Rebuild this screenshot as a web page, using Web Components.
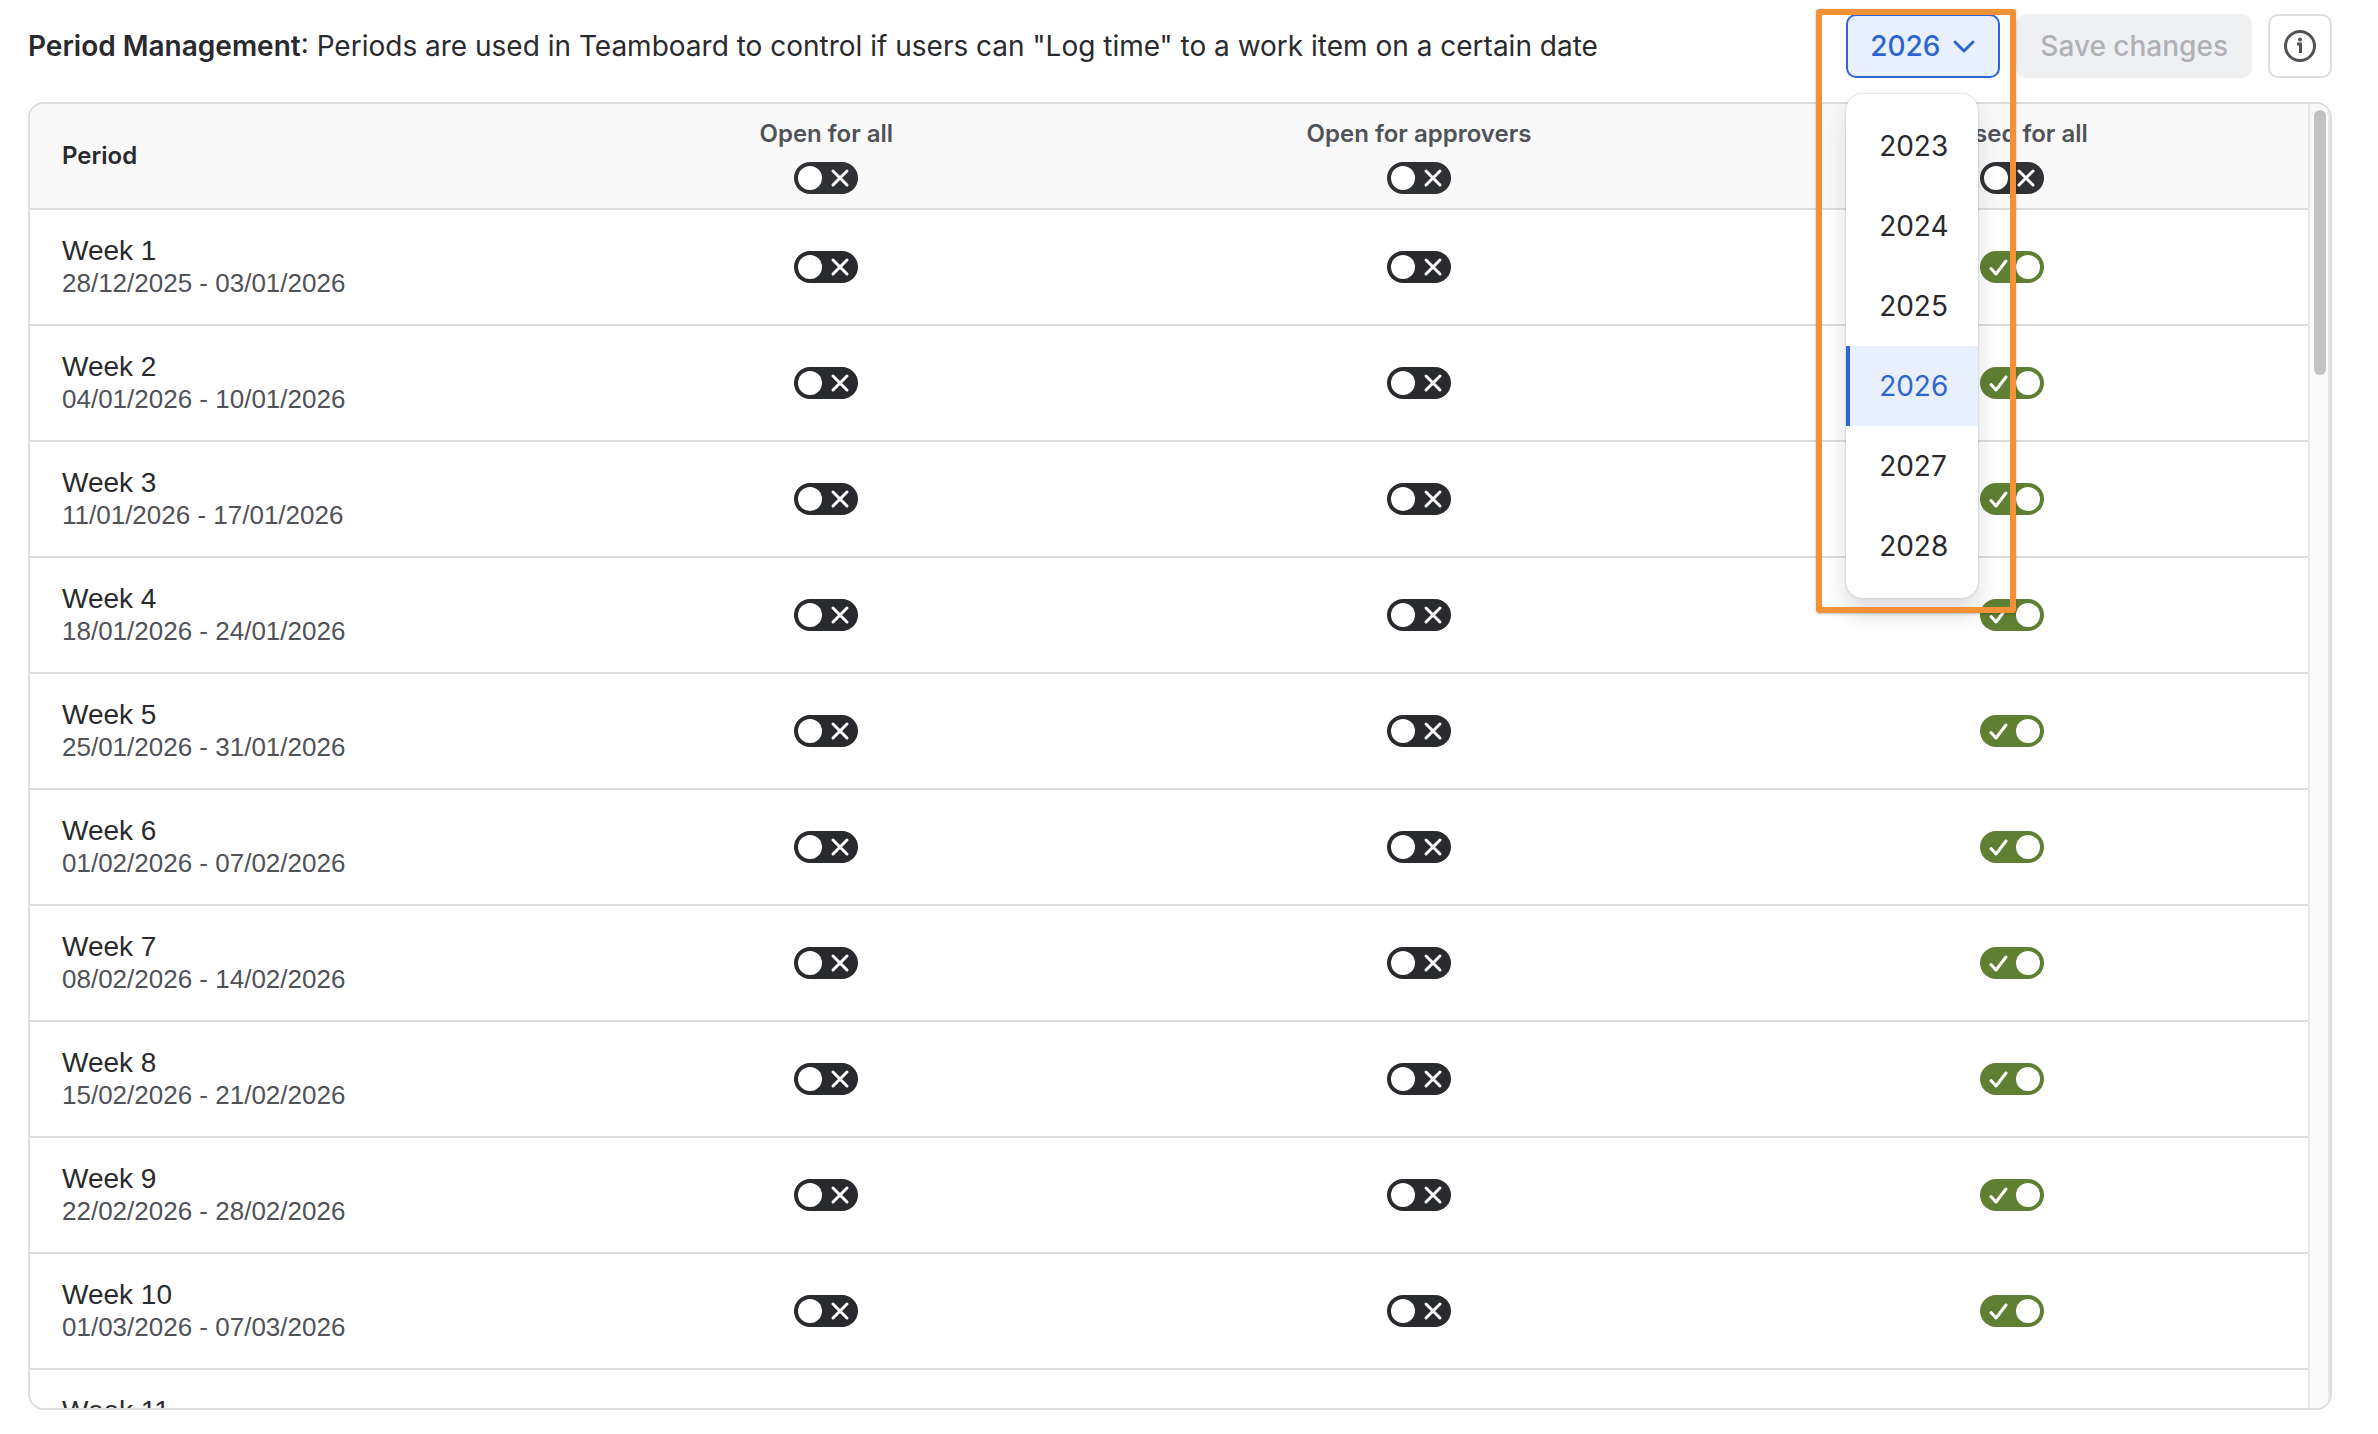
<!DOCTYPE html>
<html lang="en">
<head>
<meta charset="utf-8">
<title>Period Management</title>
<style>
  html, body { height: 100%; }
  body { margin: 0; background: #fff; color: #292a2e; font-family: Inter, "Liberation Sans", sans-serif; font-size: 28px; }
</style>
</head>
<body>
<period-page></period-page>
<script>
class ToggleSwitch extends HTMLElement {
  constructor() {
    super();
    this.attachShadow({ mode: 'open' }).innerHTML = `
      <style>
        :host { display: block; width: 64px; height: 32px; --off: #292a2e; }
        label { display: flex; align-items: center; position: relative; box-sizing: border-box; width: 100%; height: 100%; padding: 0 4px; border-radius: 16px; background: var(--off); cursor: pointer; }
        input { position: absolute; inset: 0; width: 100%; height: 100%; margin: 0; opacity: 0; cursor: pointer; }
        .knob { width: 24px; height: 24px; border-radius: 12px; background: #fff; }
        svg { width: 32px; height: 32px; fill: none; stroke: #fff; stroke-width: 3; stroke-linecap: round; stroke-linejoin: round; }
        .check { display: none; }
        label:has(:checked) { background: #5f8032; }
        :checked ~ .check { display: block; }
        :checked ~ .cross { display: none; }
      </style>
      <label>
        <input type="checkbox" role="switch">
        <svg class="check" viewBox="0 0 32 32"><path d="M7 17.5l5 5.500L22 10"/></svg>
        <span class="knob"></span>
        <svg class="cross" viewBox="0 0 32 32"><path d="M11 9l14 14M25 9L11 23"/></svg>
      </label>`;
  }
  connectedCallback() {
    const input = this.shadowRoot.querySelector('input');
    input.checked = this.hasAttribute('checked');
    input.setAttribute('aria-label', this.getAttribute('label') || '');
  }
}
customElements.define('toggle-switch', ToggleSwitch);

class YearPicker extends HTMLElement {
  constructor() {
    super();
    const years = [2023, 2024, 2025, 2026, 2027, 2028];
    this.attachShadow({ mode: 'open' }).innerHTML = `
      <style>
        :host { display: block; position: relative; z-index: 2; }
        button { font: inherit; cursor: pointer; }
        .trigger { display: flex; align-items: center; gap: 12px; box-sizing: border-box; height: 64px; padding: 0 22px; border: 2px solid #2f65d3; border-radius: 10px; background: #e9f0fd; color: #2f65d3; font-weight: 500; }
        .trigger svg { width: 24px; height: 24px; fill: none; stroke: currentColor; stroke-width: 3; stroke-linecap: round; stroke-linejoin: round; }
        .menu { position: absolute; top: 80px; left: 0; display: flex; flex-direction: column; width: 132px; padding: 12px 0; border-radius: 16px; background: #fff; box-shadow: 0 16px 24px rgba(30,31,33,.15), 0 0 2px rgba(30,31,33,.31); }
        .menu button { box-sizing: border-box; height: 80px; padding: 0 0 0 29px; border: 0; border-left: 4px solid transparent; background: none; color: #292a2e; text-align: left; }
        .menu button[aria-checked=true] { border-left-color: #2f65d3; background: #e9f0fd; color: #2f65d3; }
        .mark { position: absolute; top: -5px; left: -30px; box-sizing: border-box; width: 200px; height: 604px; border: 6px solid #f29136; border-radius: 3px; box-shadow: 0 1px 3px rgba(0,0,0,.25); pointer-events: none; }
      </style>
      <button class="trigger" aria-haspopup="menu" aria-expanded="true">2026
        <svg viewBox="0 0 24 24"><path d="M3 8l9 9 9-9"/></svg>
      </button>
      <div class="menu" role="menu">
        ${years.map(y => `<button role="menuitemradio" aria-checked="${y === 2026}">${y}</button>`).join('')}
      </div>
      <div class="mark"></div>`;
  }
}
customElements.define('year-picker', YearPicker);

class PageToolbar extends HTMLElement {
  constructor() {
    super();
    this.attachShadow({ mode: 'open' }).innerHTML = `
      <style>
        :host { display: flex; align-items: center; gap: 16px; }
        p { flex: 1; margin: 0; line-height: 32px; }
        b { font-weight: 600; }
        button { font: inherit; box-sizing: border-box; height: 64px; border-radius: 10px; }
        .save { border: 0; padding: 0 24px; background: #eff0f2; color: #afb1b6; font-weight: 500; }
        .info { display: flex; align-items: center; justify-content: center; width: 64px; padding: 0; border: 2px solid #dddddf; background: #fff; color: #505258; }
        svg { width: 32px; height: 32px; fill: none; stroke: currentColor; stroke-width: 3; }
      </style>
      <p><b><slot name="title"></slot></b>: <slot></slot></p>
      <year-picker></year-picker>
      <button class="save" disabled>Save changes</button>
      <button class="info" aria-label="Information">
        <svg viewBox="0 0 32 32"><circle cx="16" cy="16" r="14.500"/><path d="M13 14h3.500v9"/><circle cx="16" cy="9.500" r="2" fill="currentColor" stroke="none"/></svg>
      </button>`;
  }
}
customElements.define('page-toolbar', PageToolbar);

class PeriodTable extends HTMLElement {
  constructor() {
    super();
    const day = 86400000;
    const fmt = t => new Date(t).toISOString().slice(0, 10).split('-').reverse().join('/');
    const start = Date.UTC(2025, 11, 28);
    const rows = Array.from({ length: 11 }, (_, i) => {
      const from = start + i * 7 * day, name = `Week ${i + 1}`;
      return `<tr><td><div class="name">${name}</div><div class="dates">${fmt(from)} - ${fmt(from + 6 * day)}</div></td>
        <td><toggle-switch label="${name} open for all"></toggle-switch></td>
        <td><toggle-switch label="${name} open for approvers"></toggle-switch></td>
        <td><toggle-switch checked label="${name} closed for all"></toggle-switch></td></tr>`;
    }).join('');
    this.attachShadow({ mode: 'open' }).innerHTML = `
      <style>
        :host { display: flex; min-height: 0; overflow: hidden; border: 2px solid #dddddd; border-radius: 16px; }
        .view { flex: 1; overflow: hidden; }
        table { width: 100%; table-layout: fixed; border-collapse: separate; border-spacing: 0; }
        th, td { box-sizing: border-box; padding: 0 32px; border-bottom: 2px solid #dddddd; text-align: left; vertical-align: middle; }
        th { height: 106px; background: #f9f9f9; font-size: 24px; line-height: 32px; font-weight: 600; }
        th:first-child { width: 500px; }
        td { height: 116px; font-family: "Liberation Sans", sans-serif; }
        th:not(:first-child) { padding: 0; color: #505258; text-align: center; }
        th toggle-switch { margin-top: 12px; --off: #303135; }
        toggle-switch { margin: 0 auto; }
        .name { font-size: 28px; line-height: 32px; }
        .dates { font-size: 26px; line-height: 32px; color: #505258; }
        .track { box-sizing: border-box; width: 22px; padding: 6px 4px; border: solid #e8e8e8; border-width: 0 2px; background: #fafafa; }
        .thumb { width: 12px; height: 265px; border-radius: 6px; background: #c1c1c1; }
      </style>
      <div class="view"><table>
        <thead><tr><th scope="col">Period</th>
          <th scope="col">Open for all<toggle-switch label="Open for all"></toggle-switch></th>
          <th scope="col">Open for approvers<toggle-switch label="Open for approvers"></toggle-switch></th>
          <th scope="col">Closed for all<toggle-switch label="Closed for all"></toggle-switch></th></tr></thead>
        <tbody>${rows}</tbody>
      </table></div>
      <div class="track"><div class="thumb"></div></div>`;
  }
}
customElements.define('period-table', PeriodTable);

class PeriodPage extends HTMLElement {
  constructor() {
    super();
    this.attachShadow({ mode: 'open' }).innerHTML = `
      <style>
        :host { display: flex; flex-direction: column; gap: 24px; box-sizing: border-box; height: 100vh; padding: 14px 46px 24px 28px; }
        period-table { flex: 1; }
      </style>
      <page-toolbar><span slot="title">Period Management</span>Periods are used in Teamboard to control if users can "Log time" to a work item on a certain date</page-toolbar>
      <period-table></period-table>`;
  }
}
customElements.define('period-page', PeriodPage);
</script>
</body>
</html>
